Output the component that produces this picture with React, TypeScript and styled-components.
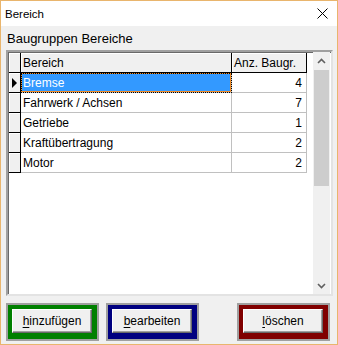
import React from "react";
import styled, { createGlobalStyle } from "styled-components";

const Global = createGlobalStyle`
  html, body { margin: 0; padding: 0; background: #fff; }
  body { font-family: "Liberation Sans", Arial, sans-serif; }
  * { box-sizing: border-box; }
`;

const Window = styled.div`
  width: 338px;
  height: 345px;
  border: 1px solid #e9b56d;
  background: #f0f0f0;
  display: flex;
  flex-direction: column;
  overflow: hidden;
`;

const TitleBar = styled.div`
  height: 25px;
  background: #fff;
  display: flex;
  align-items: center;
  justify-content: space-between;
  padding: 0 9px 0 4px;
  font-family: "Liberation Sans", Arial, sans-serif;
  font-size: 11.5px;
  color: #000;
`;

const Body = styled.div`
  flex: 1;
  display: flex;
  flex-direction: column;
  padding: 0 4px 0 5px;
`;

const Label = styled.div`
  height: 24px;
  line-height: 25px;
  padding-left: 1px;
  font-size: 13px;
  color: #000;
`;

const GridBox = styled.div`
  height: 246px;
  border-style: solid;
  border-width: 2px;
  border-color: #a0a0a0 #e3e3e3 #e3e3e3 #a0a0a0;
  box-shadow: inset 1px 1px 0 #696969;
  background: #fff;
  display: flex;
  padding: 0 0 0 1px;
`;

const GridArea = styled.div`
  flex: 1;
  display: flex;
  flex-direction: column;
  padding-top: 1px;
`;

const Row = styled.div`
  display: flex;
  height: 20px;
`;

const Indicator = styled.div`
  width: 12px;
  height: 20px;
  background: #f0f0f0;
  border-right: 1px solid #000;
  border-bottom: 1px solid #000;
  box-shadow: inset 1px 1px 0 #fff;
  display: flex;
  align-items: center;
  padding-left: 3px;
`;

const Arrow = styled.div`
  width: 0;
  height: 0;
  border-top: 5px solid transparent;
  border-bottom: 5px solid transparent;
  border-left: 5px solid #000;
`;

const HeaderCell = styled.div<{ $w: number }>`
  width: ${(p) => p.$w}px;
  height: 20px;
  background: #f0f0f0;
  border-right: 1px solid #000;
  border-bottom: 1px solid #000;
  box-shadow: inset 1px 1px 0 #fff;
  font-size: 12px;
  line-height: 20px;
  padding-left: 2px;
  white-space: nowrap;
  overflow: hidden;
`;

const Cell = styled.div<{ $w: number; $right?: boolean; $sel?: boolean }>`
  width: ${(p) => p.$w}px;
  height: 20px;
  border-right: 1px solid #c0c0c0;
  border-bottom: 1px solid #c0c0c0;
  font-size: 12px;
  line-height: 20px;
  padding: ${(p) => (p.$right ? "0 4px 0 0" : "0 0 0 2px")};
  text-align: ${(p) => (p.$right ? "right" : "left")};
  color: ${(p) => (p.$sel ? "#fff" : "#000")};
  background: ${(p) => (p.$sel ? "#3399ff" : "#fff")};
  box-shadow: ${(p) => (p.$sel ? "inset 0 0 0 1px #f08a24" : "none")};
  outline: ${(p) => (p.$sel ? "1px dotted #000" : "none")};
  outline-offset: -1px;
  white-space: nowrap;
  overflow: hidden;
`;

const ScrollBar = styled.div`
  width: 17px;
  background: #f0f0f0;
  display: flex;
  flex-direction: column;
  margin-right: 1px;
`;

const ScrollBtn = styled.div`
  height: 17px;
  display: flex;
  align-items: center;
  justify-content: center;
`;

const Track = styled.div`
  flex: 1;
  padding: 1px 1px 0 1px;
  display: flex;
  flex-direction: column;
`;

const Thumb = styled.div`
  height: 116px;
  background: #cdcdcd;
`;

const ButtonRow = styled.div`
  display: flex;
  margin-top: 7px;
  padding-right: 3px;
`;

const Frame = styled.div<{ $color: string; $ml: string }>`
  flex: none;
  width: 93px;
  height: 38px;
  border: 2px solid #a0a0a0;
  background: ${(p) => p.$color};
  padding: 2px 5px 6px 4px;
  margin-left: ${(p) => p.$ml};
`;

const Btn = styled.div`
  width: 80px;
  height: 24px;
  background: #f0f0f0;
  border-top: 1px solid #fff;
  border-left: 1px solid #fff;
  border-right: 1px solid #696969;
  border-bottom: 1px solid #696969;
  box-shadow: inset -1px -1px 0 #a0a0a0;
  display: flex;
  align-items: center;
  justify-content: center;
  font-size: 12px;
  color: #000;
  margin-top: 2px;
  & u { text-decoration: underline; text-underline-offset: 2px; }
`;

const Chevron = ({ up }: { up?: boolean }) => (
  <svg width="9" height="6" viewBox="0 0 9 6">
    <polyline
      points={up ? "1,5 4.5,1.5 8,5" : "1,1 4.5,4.5 8,1"}
      fill="none"
      stroke="#606060"
      strokeWidth="1.6"
    />
  </svg>
);

const rows = [
  { name: "Bremse", n: 4 },
  { name: "Fahrwerk / Achsen", n: 7 },
  { name: "Getriebe", n: 1 },
  { name: "Kraftübertragung", n: 2 },
  { name: "Motor", n: 2 },
];

export default function App() {
  return (
    <>
      <Global />
      <Window>
        <TitleBar>
          <span>Bereich</span>
          <svg width="11" height="11" viewBox="0 0 11 11">
            <path d="M0.5 0.5 L10.5 10.5 M10.5 0.5 L0.5 10.5" stroke="#000" strokeWidth="1" />
          </svg>
        </TitleBar>
        <Body>
          <Label>Baugruppen Bereiche</Label>
          <GridBox>
            <GridArea>
              <Row>
                <Indicator />
                <HeaderCell $w={211}>Bereich</HeaderCell>
                <HeaderCell $w={75}>Anz. Baugr.</HeaderCell>
              </Row>
              {rows.map((r, i) => (
                <Row key={r.name}>
                  <Indicator>{i === 0 && <Arrow />}</Indicator>
                  <Cell $w={211} $sel={i === 0}>
                    {r.name}
                  </Cell>
                  <Cell $w={75} $right>
                    {r.n}
                  </Cell>
                </Row>
              ))}
            </GridArea>
            <ScrollBar>
              <ScrollBtn>
                <Chevron up />
              </ScrollBtn>
              <Track>
                <Thumb />
              </Track>
              <ScrollBtn>
                <Chevron />
              </ScrollBtn>
            </ScrollBar>
          </GridBox>
          <ButtonRow>
            <Frame $color="#008000" $ml="0">
              <Btn>
                <span>
                  <u>h</u>inzufügen
                </span>
              </Btn>
            </Frame>
            <Frame $color="#000080" $ml="7px">
              <Btn>
                <span>
                  <u>b</u>earbeiten
                </span>
              </Btn>
            </Frame>
            <Frame $color="#800000" $ml="auto">
              <Btn>
                <span>
                  <u>l</u>öschen
                </span>
              </Btn>
            </Frame>
          </ButtonRow>
        </Body>
      </Window>
    </>
  );
}
